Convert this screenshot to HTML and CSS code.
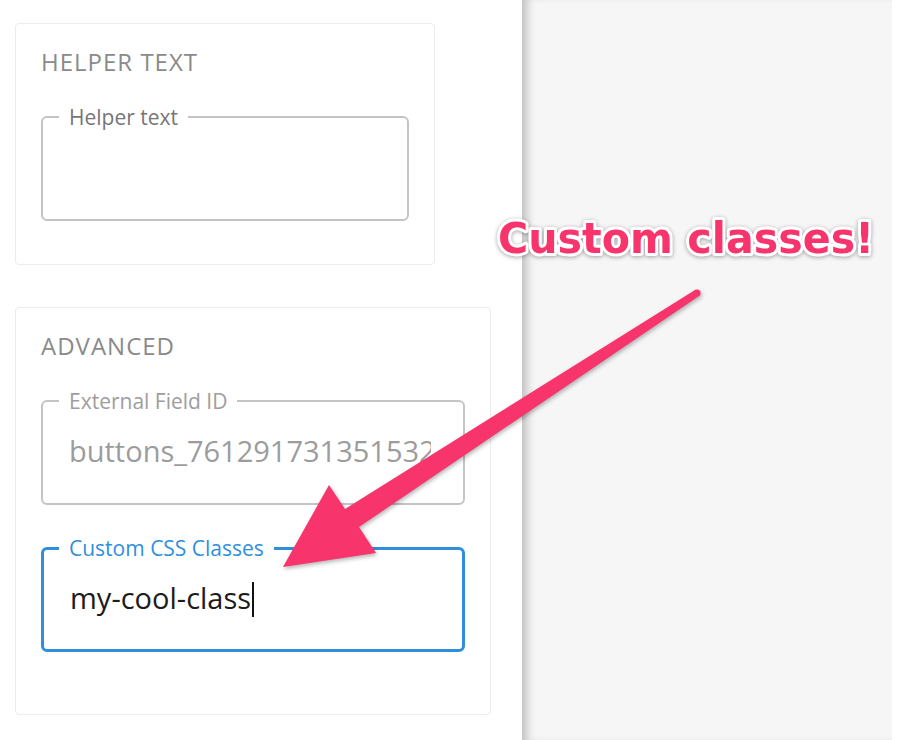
FILE: index.html
```html
<!DOCTYPE html>
<html>
 <head>
  <title>Field settings</title>
  <meta charset="utf-8" />
  <link rel="stylesheet" href="styles.css">
 </head>
 <body>
  <div class="page">
   <aside class="sidebar">
    <section class="card card-helper">
     <h3>HELPER TEXT</h3>
     <fieldset class="field">
      <legend>Helper text</legend>
      <div class="value"></div>
     </fieldset>
    </section>
    <section class="card card-advanced">
     <h3>ADVANCED</h3>
     <fieldset class="field disabled">
      <legend>External Field ID</legend>
      <div class="value">buttons_761291731351532</div>
     </fieldset>
     <fieldset class="field focused">
      <legend>Custom CSS Classes</legend>
      <div class="value">my-cool-class<span class="caret"></span></div>
     </fieldset>
    </section>
   </aside>
   <main class="canvas"></main>
   <div class="edge"></div>
  </div>

  <!-- annotation drawn over the screenshot -->
  <svg class="annotation" width="898" height="740" viewBox="0 0 898 740">
   <g class="arrow">
    <polygon points="283,567 329,485 345,509 695,290 699,296 359,527 376,553" />
    <circle cx="697" cy="293" r="3.6" />
   </g>
   <text class="callout" x="498" y="253" textLength="376" lengthAdjust="spacingAndGlyphs">Custom classes!</text>
  </svg>
 </body>
</html>
```

FILE: styles.css
```css
html, body {margin: 0; padding: 0;}
body {width: 898px; height: 740px; overflow: hidden; font-family: "Open Sans", Lato, sans-serif; background: #fff;}

.page {display: flex; height: 740px;}
.sidebar {width: 522px; flex: none; background: #fff; padding: 23px 0 0 15px; box-sizing: border-box;}
.canvas {flex: 1; background: #f6f6f6; box-shadow: inset 10px 0 10px -5px rgba(0,0,0,0.22);}
.edge {width: 6px; background: #fff;}

.card {border: 1px solid #ececec; border-radius: 4px; box-sizing: border-box; padding: 24px 25px 0 25px;}
.card-helper {width: 420px; height: 242px;}
.card-advanced {width: 476px; height: 408px; margin-top: 42px;}
.card h3 {margin: 0 0 29px 0; font-size: 24px; line-height: 28px; font-weight: 400; letter-spacing: 1px; color: #8a8a8a;}

.field {margin: 0; padding: 0 32px 0 26px; border: 2px solid #c4c4c4; border-radius: 6px; min-width: 0;}
.field legend {margin-left: -10px; padding: 0 10px; font-size: 21px; line-height: 24px; color: #767676;}
.field .value {height: 90px; box-sizing: border-box; padding-top: 20px; font-size: 29px; line-height: 36px; color: #1c1c1c; white-space: nowrap; overflow: hidden;}
.field.disabled legend {color: #9d9d9d;}
.field.disabled .value {color: #9c9c9c;}
.field.focused {border: 3px solid #2f8fdd; margin-top: 31px;}
.field.focused legend {color: #2f8fdd; margin-left: -11px;}
.field.focused .value {height: 89px;}
.caret {display: inline-block; width: 2px; height: 35px; background: #111; vertical-align: -8px; margin-left: 1px;}

.annotation {position: absolute; left: 0; top: 0; pointer-events: none;}
.arrow {fill: #f8346c; filter: drop-shadow(1px 2px 2px rgba(0,0,0,0.3));}
.callout {font-family: "DejaVu Sans", sans-serif; font-weight: bold; font-size: 42px; fill: #f8346c; stroke: #fff; stroke-width: 6px; stroke-linejoin: round; paint-order: stroke; filter: drop-shadow(0 1px 2px rgba(0,0,0,0.35));}
```
